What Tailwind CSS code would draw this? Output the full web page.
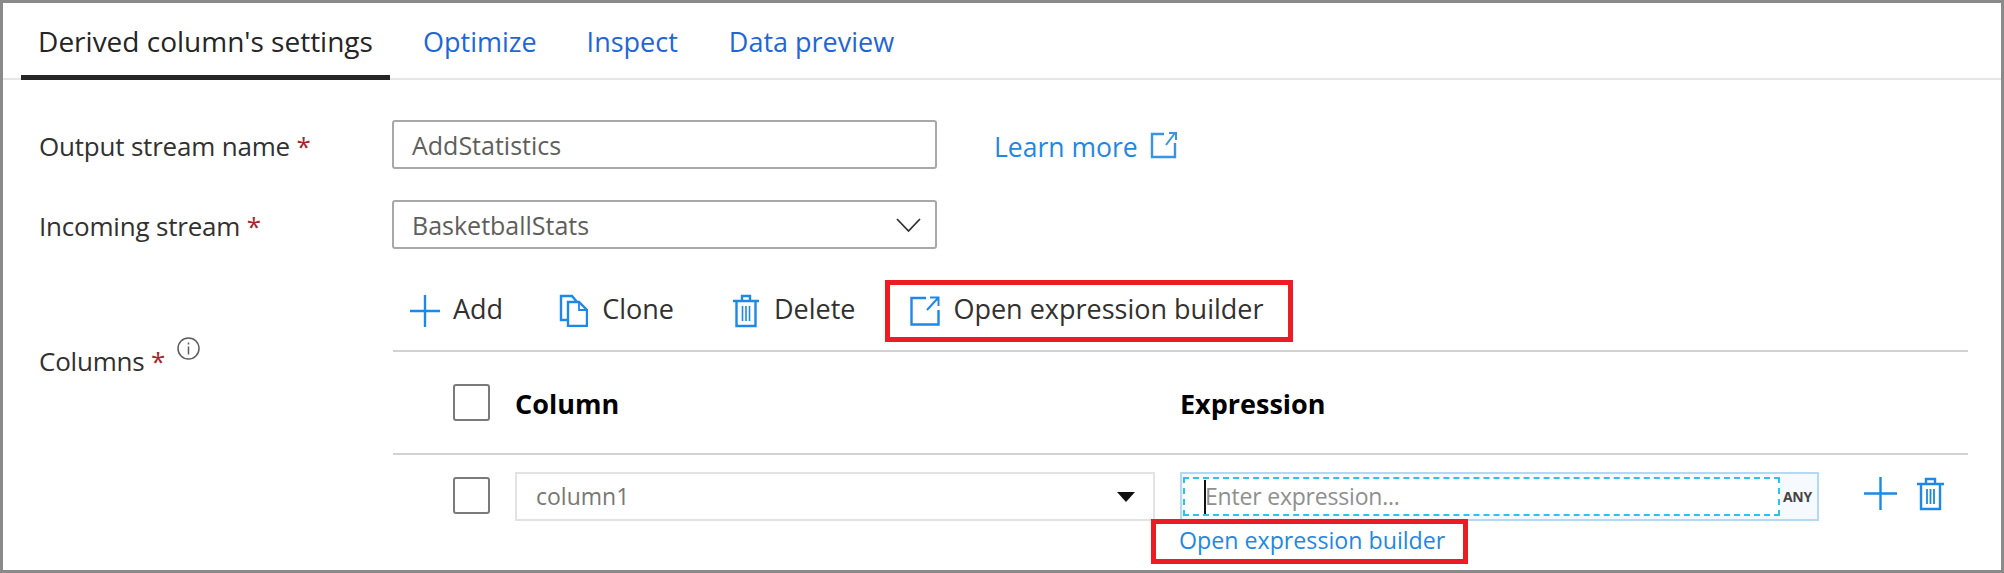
<!DOCTYPE html>
<html lang="en">
<head>
    <meta charset="UTF-8" />
    <title>Derived column's settings</title>
    <script src="https://cdn.jsdelivr.net/npm/@tailwindcss/browser@4"></script>
</head>
<body class="bg-white font-['Open_Sans',sans-serif] text-[#323130]">
    <div class="w-[2004px] h-[573px] overflow-hidden border-x-[3px] border-y-[3px] border-[#8a8a8a] bg-white">

        <!-- Tabs -->
        <div class="flex h-[77px] items-stretch border-b-2 border-[#e6e6e6] text-[27px] text-[#1f66d6]">
            <div class="ml-[18px] w-[369px] -mb-[2px] flex items-center justify-center border-b-[5px] border-[#262626] pt-[4px] text-[28px] text-[#252525]">Derived column's settings</div>
            <div class="ml-[33px] flex items-center pt-[4px]">Optimize</div>
            <div class="ml-[50px] flex items-center pt-[4px]">Inspect</div>
            <div class="ml-[51px] flex items-center pt-[4px]">Data preview</div>
        </div>

        <!-- Stream fields -->
        <div class="mt-[40px] flex h-[49px] items-center">
            <div class="w-[389px] pl-[36px] pt-[4px] text-[26px] tracking-[-0.2px]">Output stream name <span class="text-[#a4262c]">*</span></div>
            <div class="flex h-[49px] w-[545px] items-center rounded-[3px] border-2 border-[#a8a8a8] pl-[18px] pt-[3px] text-[25px] text-[#605e5c]">AddStatistics</div>
            <div class="ml-[57px] flex items-center text-[26.500px] text-[#1e88e5]"><span class="pt-[6px]">Learn more</span>
                <svg class="ml-[12px]" width="27" height="28" viewBox="0 0 27 28" fill="none" stroke="#3b94e0" stroke-width="2.4"><path d="M14 3H2v23h23V12"/><path d="M25 2 16 14M19 2h7v7" stroke-width="2"/></svg>
            </div>
        </div>
        <div class="mt-[31px] flex h-[49px] items-center">
            <div class="w-[389px] pl-[36px] pt-[4px] text-[26px] tracking-[-0.2px]">Incoming stream <span class="text-[#a4262c]">*</span></div>
            <div class="flex h-[49px] w-[545px] items-center justify-between rounded-[3px] border-2 border-[#a8a8a8] pl-[18px] pr-[14px] text-[25px] text-[#605e5c]">
                <span class="pt-[3px]">BasketballStats</span>
                <svg width="25" height="16" viewBox="0 0 25 16" fill="none" stroke="#323130" stroke-width="1.8"><path d="M1 2l11.500 12L24 2"/></svg>
            </div>
        </div>

        <!-- Columns -->
        <div class="flex">
            <div class="w-[390px] shrink-0 pl-[36px] pt-[93px] text-[26px] tracking-[-0.2px]">
                <div class="flex items-start">
                    <span>Columns <span class="text-[#a4262c]">*</span></span>
                    <svg class="ml-[11px] mt-[-6px]" width="25" height="25" viewBox="0 0 25 25" fill="none" stroke="#605e5c" stroke-width="1.500"><circle cx="12.500" cy="12.500" r="10.500"/><path d="M12.500 10.500v8M12.500 6.500v2"/></svg>
                </div>
            </div>
            <div class="w-[1575px] shrink-0">

                <!-- Toolbar -->
                <div class="mt-[31px] flex h-[72px] items-start border-b-2 border-[#d2d2d2] pl-[17px] text-[27px]">
                    <div class="flex h-[62px] items-center">
                        <svg class="-mt-[1px]" width="30" height="32" viewBox="0 0 30 32" fill="none" stroke="#1e88e5" stroke-width="2.400"><path d="M0 16h30M15 0v32"/></svg>
                        <span class="ml-[13px] pb-[4px]">Add</span>
                    </div>
                    <div class="ml-[56px] flex h-[62px] items-center">
                        <svg class="-mt-[1px]" width="29" height="33" viewBox="0 0 29 33" fill="none" stroke="#1e88e5" stroke-width="2.400"><path d="M9 26H2V2h11l5 6"/><path d="M9 8h11l8 8v16H9z"/><path d="M20 8v8h8" stroke-width="1.800"/></svg>
                        <span class="ml-[14px] pb-[4px]">Clone</span>
                    </div>
                    <div class="ml-[59px] flex h-[62px] items-center">
                        <svg class="-mt-[1px]" width="26" height="34" viewBox="0 0 26 34" fill="none" stroke="#1e88e5" stroke-width="2.400"><path d="M0 7h26M9 7V2h8v5M3.500 7v25h19V7"/><path d="M9.500 12v15M13 12v15M16.500 12v15" stroke-width="1.600"/></svg>
                        <span class="ml-[15px] pb-[4px]">Delete</span>
                    </div>
                    <div class="ml-[30px] flex h-[62px] w-[408px] items-center border-[5px] border-[#ed1c24] pl-[20px]">
                        <svg class="-mt-[1px]" width="30" height="30" viewBox="0 0 30 30" fill="none" stroke="#1e88e5" stroke-width="2.400"><path d="M16 2H1.500v26.500h27V14"/><path d="M28 2 17 14M20 1.500h8.500V10" stroke-width="2"/></svg>
                        <span class="ml-[13px] pb-[4px]">Open expression builder</span>
                    </div>
                </div>

                <!-- Table header -->
                <div class="flex h-[103px] items-center border-b-2 border-[#d2d2d2] pl-[60px] text-[27px] font-bold text-black">
                    <div class="h-[37px] w-[37px] rounded-[3px] border-2 border-[#7a7a7a]"></div>
                    <div class="ml-[25px] w-[665px] pt-[3px]">Column</div>
                    <div class="pt-[3px]">Expression</div>
                </div>

                <!-- Table row -->
                <div class="flex items-start pl-[60px] pt-[17px]">
                    <div class="mt-[5px] h-[37px] w-[37px] rounded-[3px] border-2 border-[#7a7a7a]"></div>
                    <div class="ml-[25px] flex h-[49px] w-[640px] items-center justify-between border-2 border-[#e3e3e3] pl-[19px] pr-[18px] text-[23px] text-[#797775]">
                        column1
                        <svg width="18" height="10" viewBox="0 0 18 10" fill="#111"><path d="M0 0h18L9 10z"/></svg>
                    </div>
                    <div class="ml-[25px] w-[639px]">
                        <div class="flex h-[49px] items-center border-2 border-[#b5d8f3] bg-[#f6fafe] pl-[1px]">
                            <div class="flex h-[39px] w-[597px] items-center border-2 border-dashed border-[#2cc4ee] bg-white pl-[19px] text-[23px] tracking-[-0.2px] text-[#8f8f8f]">
                                <div class="mr-[-1px] h-[34px] w-[2px] bg-[#111]"></div>Enter expression...
                            </div>
                            <div class="ml-[3px] text-[14px] font-bold tracking-[-0.3px] text-[#444]">ANY</div>
                        </div>
                        <div class="-ml-[29px] -mt-[2px] flex h-[45px] w-[317px] items-center border-[5px] border-[#ed1c24] pb-[3px] pl-[23px] text-[23.200px] text-[#1e88e5]">Open expression builder</div>
                    </div>
                    <svg class="ml-[45px] mt-[5px]" width="33" height="33" viewBox="0 0 33 33" fill="none" stroke="#1e88e5" stroke-width="2.400"><path d="M0 16.500h33M16.500 0v33"/></svg>
                    <svg class="ml-[20px] mt-[5px]" width="27" height="34" viewBox="0 0 27 34" fill="none" stroke="#1e88e5" stroke-width="2.400"><path d="M0 7h27M9 7V2h9v5M4 7v25h19V7"/><path d="M10 12v15M13.500 12v15M17 12v15" stroke-width="1.800"/></svg>
                </div>
            </div>
        </div>
    </div>
</body>
</html>
